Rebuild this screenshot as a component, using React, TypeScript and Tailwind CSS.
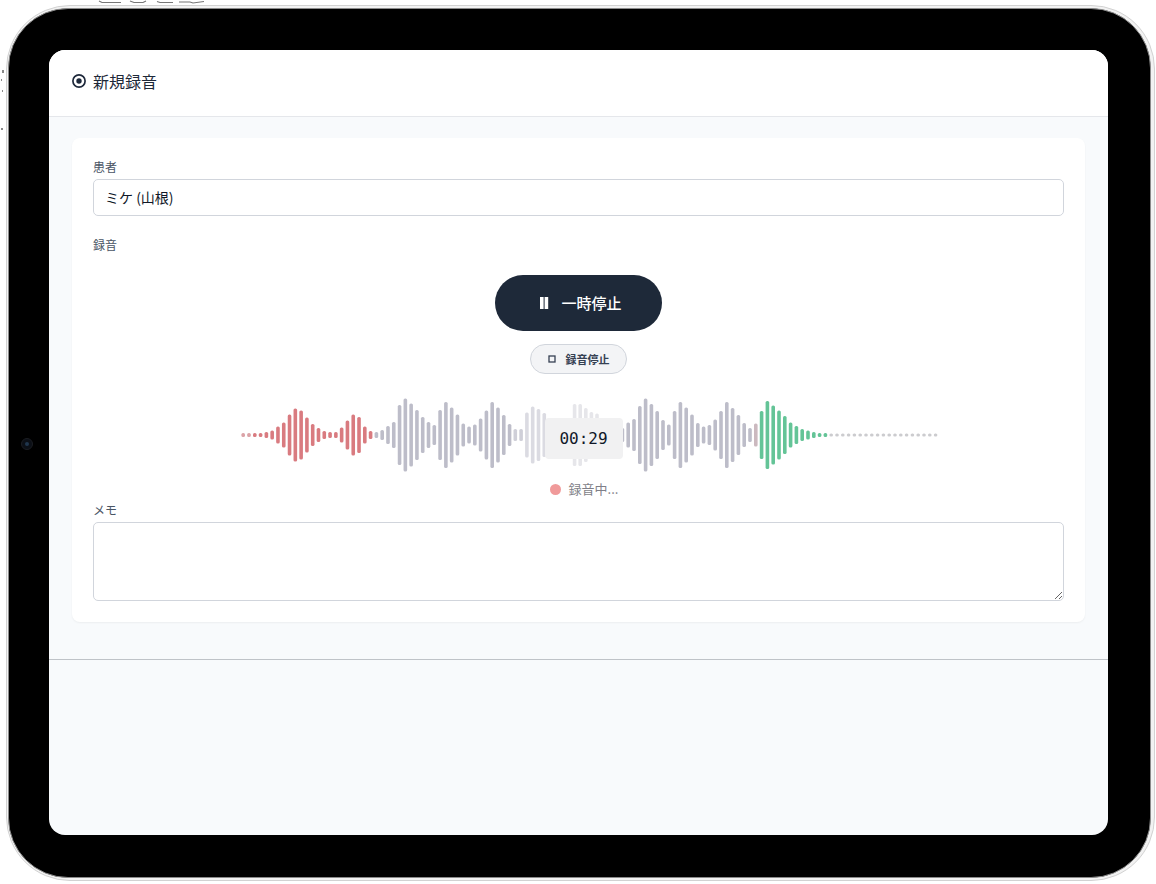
import { useState } from 'react';

type Bar = { x: number; height: number; color: string };

const RED = '#d97b80';
const GRAY = '#bdbdc9';
const LIGHT = '#dbdbe2';
const FAINT = '#e6e6ea';
const GREEN = '#64c497';
const DOT = '#cccccf';

const WAVE_WIDTH = 720;
const WAVE_HEIGHT = 80;

function makeBars(start: number, step: number, color: string, heights: number[]): Bar[] {
    return heights.map((height, i) => ({ x: start + i * step, height, color }));
}

const bars: Bar[] = [
    ...makeBars(24.3, 5.79, '#dba3a7', [4, 4]),
    ...makeBars(35.9, 5.79, RED, [4, 4, 6, 9, 17, 25, 41, 53, 49, 35, 22, 14, 8, 6, 6, 15, 29, 41, 36, 17, 8]),
    ...makeBars(157.5, 5.79, GRAY, [6, 10, 18, 26, 60, 73, 63, 50, 36, 26, 20, 50, 66, 55, 41, 23, 17, 21, 33, 49, 66, 55, 40, 22]),
    ...makeBars(296.4, 5.79, '#cfcfd8', [12, 12]),
    ...makeBars(308, 5.79, LIGHT, [45, 57, 52, 44]),
    ...makeBars(355.7, 5.6, FAINT, [62, 62, 54, 46, 43]),
    ...makeBars(403.5, 5.8, GRAY, [14, 25, 32, 58, 73, 62, 48, 30, 21, 48, 66, 55, 41, 24, 17, 20, 31, 48, 66, 54, 40, 24, 14]),
    ...makeBars(536.9, 5.8, '#cbb9bf', [23]),
    ...makeBars(542.7, 5.8, GREEN, [48, 68, 59, 49, 38, 25, 18, 12, 9, 6, 4, 4]),
    ...makeBars(612.3, 5.8, DOT, [3, 3, 3, 3, 3, 3, 3, 3, 3, 3, 3, 3, 3, 3, 3, 3, 3, 3, 3]),
];

function Waveform() {
    return (
        <svg
            className="block h-20 w-full"
            viewBox={`0 0 ${WAVE_WIDTH} ${WAVE_HEIGHT}`}
            role="img"
            aria-label="音声波形"
        >
            {bars.map((bar) => (
                <rect
                    key={bar.x}
                    x={bar.x - 1.9}
                    y={(WAVE_HEIGHT - bar.height) / 2}
                    width="3.6"
                    height={bar.height}
                    rx="1.6"
                    fill={bar.color}
                />
            ))}
        </svg>
    );
}

function RecordIcon() {
    return (
        <svg className="h-4 w-4" viewBox="0 0 16 16" fill="none" aria-hidden="true">
            <circle cx="8" cy="8" r="6.1" stroke="#1e293b" strokeWidth="1.7" />
            <circle cx="8" cy="8" r="2.7" fill="#1e293b" />
        </svg>
    );
}

function RecordingForm() {
    const [patient, setPatient] = useState('ミケ (山根)');
    const [memo, setMemo] = useState('');
    const [paused, setPaused] = useState(false);

    return (
        <form className="flex flex-col rounded-lg bg-white p-[21px] shadow-xs" onSubmit={(e) => e.preventDefault()}>
            <label htmlFor="patient" className="text-xs text-gray-600">患者</label>
            <input
                id="patient"
                type="text"
                value={patient}
                onChange={(e) => setPatient(e.target.value)}
                className="mt-1 h-[37px] w-full rounded-[5px] border border-gray-300 bg-white px-[11px] pb-[2px] text-sm text-gray-900"
            />

            <h2 className="mt-[21px] text-xs text-gray-600">録音</h2>
            <div className="mt-[22px] flex flex-col items-center">
                <button
                    type="button"
                    aria-pressed={paused}
                    onClick={() => setPaused(!paused)}
                    className="flex h-14 w-[167px] items-center justify-center gap-3 rounded-full bg-gray-800 pl-1 text-[15px] font-medium text-white"
                >
                    <svg className="h-3 w-[10px]" viewBox="0 0 10 12" fill="currentColor" aria-hidden="true">
                        <rect x="1" width="3.6" height="12" />
                        <rect x="5.6" width="3.6" height="12" />
                    </svg>
                    一時停止
                </button>
                <button
                    type="button"
                    className="mt-[13px] flex h-[30px] w-[97px] items-center justify-center gap-[10px] rounded-full border border-gray-300 bg-gray-100 text-[11px] font-bold text-gray-700"
                >
                    <svg className="h-2 w-2" viewBox="0 0 8 8" fill="none" aria-hidden="true">
                        <rect x="1" y="1" width="6" height="6" stroke="currentColor" strokeWidth="1.3" />
                    </svg>
                    録音停止
                </button>

                <div className="relative mt-[21px] w-full max-w-[720px]">
                    <Waveform />
                    <time className="absolute top-[23px] left-[326px] flex h-[41px] w-[78px] items-center justify-center rounded bg-[#f1f1f2] font-['DejaVu_Sans_Mono',monospace] text-base text-gray-900">
                        00:29
                    </time>
                </div>

                <p className="mt-1 flex items-center gap-2 pl-[11px] text-[13px] leading-5 text-[#7f7f88]">
                    <span className="h-[11px] w-[11px] rounded-full bg-[#f09a9a]"></span>
                    録音中...
                </p>
            </div>

            <label htmlFor="memo" className="mt-[3px] text-xs text-gray-600">メモ</label>
            <textarea
                id="memo"
                value={memo}
                onChange={(e) => setMemo(e.target.value)}
                className="mt-1 h-[79px] w-full resize-y rounded-[5px] border border-gray-300 bg-white px-3 py-2 text-sm text-gray-900"
            ></textarea>
        </form>
    );
}

export default function App() {
    return (
        <div className="relative flex h-screen min-h-[760px] bg-white pt-[5px] pr-px pb-[3px] pl-[6px] font-['Noto_Sans_CJK_JP',sans-serif]">
            {/* アルミ縁の小さなボタンと反射 */}
            <svg className="absolute top-0 left-24 h-1 w-28" viewBox="0 0 112 4" fill="none" stroke="#777777" aria-hidden="true">
                <path d="M3 1L6 2.5H25M34 1L38 2.5H47L50 1M61 1.5L64 2.5H77M83 2H94L97 3L108 1.5" strokeWidth="1.2" />
            </svg>
            <svg className="absolute top-[66px] left-0 h-20 w-1" viewBox="0 0 4 80" fill="#888888" aria-hidden="true">
                <path d="M2 4h2v3H2zM1 13h1v2H1zM2 24h1v2H2zM1 62h2v2H1z" />
            </svg>

            <div className="flex flex-1 rounded-[64px] border border-[#d2d2d2] bg-[#f2f2f2] pt-[2px] pr-[3px] pb-[2px] pl-px">
                <div className="relative flex flex-1 rounded-[60px] border border-[#8a8a8a] bg-black pt-[41px] pr-[42px] pb-[42px] pl-10">
                    <span className="absolute top-[429px] left-3 flex h-3 w-3 items-center justify-center rounded-full border border-[#1b1d22] bg-[#0b0f16]">
                        <span className="h-1 w-1 rounded-full bg-[#20364d]"></span>
                    </span>

                    <div className="flex flex-1 flex-col overflow-hidden rounded-2xl bg-[#f8fafc]">
                        <header className="flex h-[67px] shrink-0 items-center gap-[6px] border-b border-gray-200 bg-white px-[22px] pb-1">
                            <RecordIcon />
                            <h1 className="text-base text-gray-800">新規録音</h1>
                        </header>
                        <main className="border-b border-[#bfc3c8] px-[23px] pt-[21px] pb-[37px]">
                            <RecordingForm />
                        </main>
                    </div>
                </div>
            </div>
        </div>
    );
}
